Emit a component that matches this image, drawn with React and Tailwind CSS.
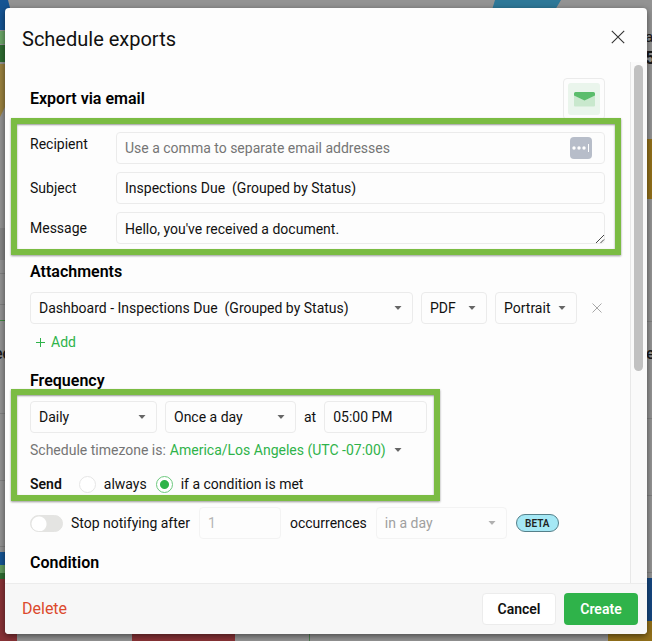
import React from "react";

const field =
  "h-8 min-w-0 rounded-[4px] border border-[#ebebeb] bg-[#fdfdfd] px-2 text-[14px] text-[#111] outline-none";

function Caret({ className }) {
  return (
    <svg
      viewBox="0 0 8 4"
      className={"pointer-events-none h-1 w-2 text-[#666] " + className}
      fill="currentColor"
      aria-hidden="true"
    >
      <path d="M0.500 0h7L4.400 3.600a.6.6 0 0 1-.8 0z" />
    </svg>
  );
}

function Select({ label, value, options, className, disabled }) {
  return (
    <div className={"relative flex items-center " + className}>
      <select
        aria-label={label}
        defaultValue={value}
        disabled={disabled}
        className={
          "w-full appearance-none disabled:border-[#f3f3f3] disabled:text-[#a0a0a0] disabled:opacity-100 " +
          field
        }
      >
        {(options || [value]).map((o) => (
          <option key={o}>{o}</option>
        ))}
      </select>
      <Caret className={disabled ? "absolute right-[11px] opacity-50" : "absolute right-[11px]"} />
    </div>
  );
}

function Radio({ label, name, defaultChecked }) {
  return (
    <label className="flex items-center gap-2">
      <input
        type="radio"
        name={name}
        defaultChecked={defaultChecked}
        className="h-[17px] w-[17px] appearance-none rounded-full border border-[#e6e6e6] bg-white checked:border-[#6cc97d] checked:bg-[radial-gradient(circle,#2fb34a_4px,#fff_5px)]"
      />
      {label}
    </label>
  );
}

function Highlight({ className }) {
  return (
    <div
      aria-hidden="true"
      className={
        "pointer-events-none absolute border-[6px] border-[#7bbc43] shadow-[0_1px_2px_rgba(0,0,0,0.4),inset_0_1px_2px_rgba(0,0,0,0.4)] " +
        className
      }
    />
  );
}

function Heading({ children, className }) {
  return (
    <h3 className={"text-[16px] leading-6 font-semibold text-black " + className}>{children}</h3>
  );
}

function Backdrop() {
  return (
    <div aria-hidden="true" className="absolute inset-0 overflow-hidden bg-[#939393] text-[#1a1a1a]">
      <svg className="absolute top-0 left-0" width="16" height="641">
        <path d="M0 0h8l3 12-3 18H0z" fill="#155493" />
        <path d="M0 31h8v13H0z" fill="#6ba568" />
        <path d="M0 45h8v17H0z" fill="#2f6c31" />
        <path d="M0 64h8v37L0 117z" fill="#99813f" />
        <path d="M0 228h8v32H0z" fill="#858585" />
        <path d="M0 273.500h8M0 304.500h8M0 413.500h8M0 480.500h8M0 546.500h8" stroke="#808080" />
        <path d="M0 320.500h8" stroke="#3f8a3f" />
        <path d="M0 552h8v13H0z" fill="#155493" />
        <path d="M0 565h8v8H0z" fill="#639c5f" />
        <path d="M0 573h8v6H0z" fill="#2f6c31" />
      </svg>
      <svg className="absolute top-0 left-[490px]" width="76" height="10">
        <path d="M5 0h66l-6 10H2z" fill="#2e7898" />
      </svg>
      <svg className="absolute top-0 right-0" width="8" height="641">
        <path d="M0 139h8v60H0z" fill="#92701a" />
        <path d="M0 321.500h8M0 418.500h8M0 495.500h8M0 572.500h8" stroke="#808080" />
        <path d="M0 578h8v43H0z" fill="#15467f" />
      </svg>
      <svg className="absolute bottom-0 left-0" width="652" height="62">
        <path d="M0 0h8v50h9v12H0z" fill="#883236" />
        <path d="M132 50h103v12H132z" fill="#883236" />
        <path d="M309.500 50v12" stroke="#4e7d50" />
        <path d="M608 42h44v20h-44z" fill="#92701a" />
      </svg>
      <span className="absolute top-[342px] -left-[6px] text-[16px] leading-6 font-medium">ec</span>
      <span className="absolute top-[25px] left-[645px] text-[15px] leading-6">a</span>
      <span className="absolute top-[46px] left-[645px] text-[18px] leading-6 font-bold">5</span>
      <span className="absolute top-[342px] left-[646px] text-[16px] leading-6 font-medium">e</span>
    </div>
  );
}

export default function App() {
  return (
    <div className="relative min-h-screen px-[5px] pt-2 pb-[7px] font-[Roboto,sans-serif] text-[14px] text-[#111]">
      <Backdrop />
      <div
        role="dialog"
        aria-label="Schedule exports"
        className="relative flex flex-col overflow-hidden rounded-[4px] bg-[#fdfdfd] shadow-[0_2px_6px_rgba(0,0,0,0.5)]"
      >
        <header className="flex h-[54px] items-center justify-between pt-2 pr-[22px] pl-[17px]">
          <h2 className="text-[20px] leading-7">Schedule exports</h2>
          <button type="button" aria-label="Close" className="-mt-1 text-[#333]">
            <svg width="14" height="14" viewBox="0 0 14 14" stroke="currentColor" strokeWidth="1.100">
              <path d="M.8.8l12.400 12.400M13.200.8L.8 13.200" />
            </svg>
          </button>
        </header>

        <div className="flex">
          <main className="min-w-0 flex-1 pt-4 pr-[25px] pb-2 pl-[25px]">
            <div className="flex h-[42px] items-center justify-between">
              <Heading className="">Export via email</Heading>
              <button
                type="button"
                aria-label="Email"
                className="flex h-[42px] w-[42px] items-center justify-center rounded-[4px] border border-[#ebebeb]"
              >
                <span className="flex h-8 w-8 items-center justify-center rounded-[3px] bg-[#eaf5ec]">
                  <svg width="21" height="15" viewBox="0 0 21 15">
                    <path d="M0 3l10.500 5L21 3v10.500a1 1 0 0 1-1 1H1a1 1 0 0 1-1-1z" fill="#c9e8cd" />
                    <path d="M1.500 0h18A1.500 1.500 0 0 1 21 1.500v2L10.500 8.500 0 3.500v-2A1.500 1.500 0 0 1 1.500 0z" fill="#5bbd6c" />
                  </svg>
                </span>
              </button>
            </div>

            <div className="relative mt-3 grid grid-cols-[86px_1fr] gap-y-2">
              <label htmlFor="recipient" className="leading-6">Recipient</label>
              <div className="relative flex">
                <input
                  id="recipient"
                  placeholder="Use a comma to separate email addresses"
                  className={"w-full placeholder:text-[#757575] " + field}
                />
                <span className="absolute top-[5px] right-[13px] flex h-[22px] w-[22px] items-center justify-center rounded-[4px] bg-[#b7bdc9]">
                  <svg width="18" height="10" viewBox="0 0 18 10" fill="#fff">
                    <circle cx="2" cy="5" r="1.700" />
                    <circle cx="7" cy="5" r="1.700" />
                    <circle cx="12" cy="5" r="1.700" />
                    <path d="M16 1h1v8h-1z" />
                  </svg>
                </span>
              </div>
              <label htmlFor="subject" className="leading-8">Subject</label>
              <input id="subject" defaultValue="Inspections Due  (Grouped by Status)" className={field} />
              <label htmlFor="message" className="leading-8">Message</label>
              <div className="relative flex">
                <textarea
                  id="message"
                  rows={1}
                  defaultValue="Hello, you've received a document."
                  className={"w-full resize-none overflow-hidden py-1 leading-6 " + field}
                />
                <svg className="pointer-events-none absolute right-0 bottom-0" width="9" height="9" stroke="#444" fill="none">
                  <path d="M0 8L8 0M4.500 8L8 4.500" />
                </svg>
              </div>
              <Highlight className="-top-[14px] -right-4 -bottom-[11px] -left-[19px]" />
            </div>

            <Heading className="mt-4">Attachments</Heading>
            <div className="mt-2 flex items-center">
              <Select
                label="Attachment"
                value={"Dashboard - Inspections Due \u00a0(Grouped by Status)"}
                className="min-w-0 flex-1"
              />
              <Select label="Format" value="PDF" options={["PDF", "CSV"]} className="ml-2 w-[66px]" />
              <Select
                label="Orientation"
                value="Portrait"
                options={["Portrait", "Landscape"]}
                className="ml-2 w-[82px]"
              />
              <button type="button" aria-label="Remove attachment" className="ml-3 flex w-4 justify-center text-[#a8a8a8]">
                <svg width="10" height="10" viewBox="0 0 10 10" stroke="currentColor">
                  <path d="M.5.5l9 9M9.500.5l-9 9" />
                </svg>
              </button>
            </div>
            <button type="button" className="mt-2 flex h-[21px] items-center gap-1.5 pl-1.5 text-[#2fb34a]">
              <svg width="9" height="9" viewBox="0 0 9 9" stroke="currentColor">
                <path d="M4.500 0v9M0 4.500h9" />
              </svg>
              Add
            </button>

            <Heading className="mt-4">Frequency</Heading>
            <div className="relative mt-2">
              <div className="flex items-center gap-2">
                <Select label="Period" value="Daily" className="w-[127px]" />
                <Select label="Times" value="Once a day" className="w-[131px]" />
                <label htmlFor="time">at</label>
                <input id="time" defaultValue="05:00 PM" className={"w-[103px] " + field} />
              </div>
              <p className="mt-1 flex h-[26px] items-center text-[#757575]">
                Schedule timezone is:
                <button type="button" className="ml-1 flex items-center gap-2 text-[#2fb34a]">
                  America/Los Angeles (UTC -07:00)
                  <Caret className="" />
                </button>
              </p>
              <fieldset className="mt-2 flex h-[26px] items-center gap-[9px]">
                <span className="mr-2 font-semibold">Send</span>
                <Radio name="send" label="always" />
                <Radio name="send" label="if a condition is met" defaultChecked />
              </fieldset>
              <Highlight className="-top-3 -bottom-1 -left-[19px] w-[429px]" />
            </div>

            <div className="mt-[10px] flex items-center gap-[9px]">
              <label className="flex items-center gap-2">
                <input
                  type="checkbox"
                  role="switch"
                  className="h-[17px] w-[33px] appearance-none rounded-full border border-[#e4e4e2] bg-[#e4e4e2] bg-[radial-gradient(circle_at_8px_8px,#fff_7px,#e4e4e2_8px)]"
                />
                Stop notifying after
              </label>
              <input
                id="occurrences"
                disabled
                defaultValue="1"
                className="h-8 w-[82px] rounded-[4px] border border-[#f3f3f3] bg-[#fdfdfd] px-2 text-[#b5b5b5]"
              />
              <label htmlFor="occurrences">occurrences</label>
              <Select label="Window" value="in a day" disabled className="w-[131px]" />
              <span className="flex h-[18px] w-[43px] items-center justify-center rounded-full border border-[#55808a] bg-[#a5e8f5] text-[10px] font-semibold text-[#222]">
                BETA
              </span>
            </div>

            <Heading className="mt-3">Condition</Heading>
          </main>
          <div className="w-[17px] border-l border-[#e8e8e8] bg-[#fafafa] pt-[3px] pl-[3px]">
            <div className="h-[306px] w-[9px] rounded-full bg-[#c1c1c1]" />
          </div>
        </div>

        <footer className="flex h-[51px] items-center gap-2 border-t border-[#ececec] bg-[#f7f7f7] pr-[9px] pl-[17px]">
          <button type="button" className="mr-auto text-[16px] text-[#dc4a2d]">Delete</button>
          <button type="button" className="h-8 w-[74px] rounded-[4px] border border-[#ececec] bg-white font-semibold">
            Cancel
          </button>
          <button type="button" className="h-8 w-[74px] rounded-[4px] bg-[#2fb34a] font-semibold text-white">
            Create
          </button>
        </footer>
      </div>
    </div>
  );
}
